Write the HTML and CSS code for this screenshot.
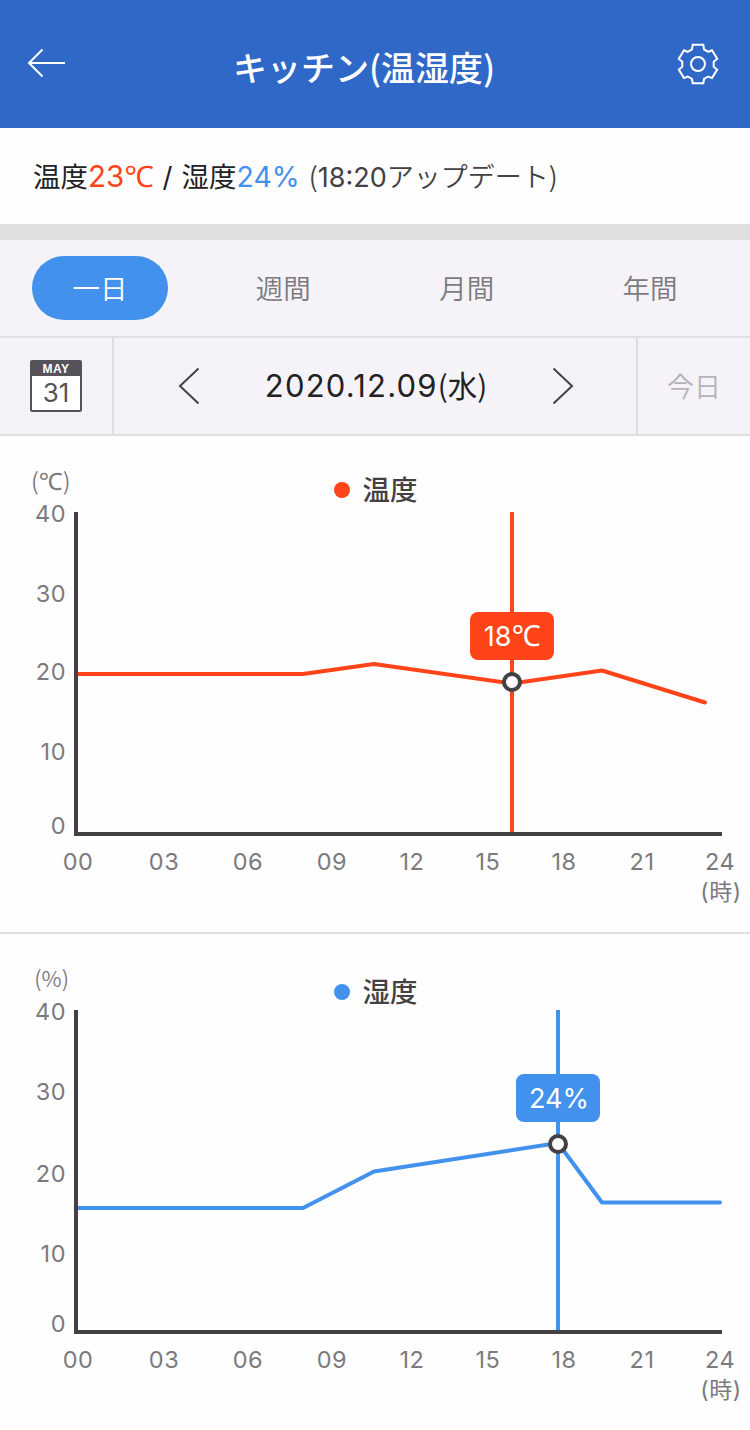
FILE: index.html
```html
<!DOCTYPE html>
<html lang="ja">
<head>
	<meta charset="UTF-8">
	<title>キッチン(温湿度)</title>
	<link rel="stylesheet" href="styles.css">
</head>
<body>
	<div class="header">
		<svg class="back" width="40" height="32" viewBox="0 0 40 32">
			<path d="M38 15H2M15.500 1.500L2 15L15.500 28.500" />
		</svg>
		<h1>キッチン(温湿度)</h1>
		<svg class="setting" width="42" height="42" viewBox="0 0 42 42">
			<path d="M15.700 1.700H26.300L27 6.300L31.300 8.800L35 7.300L40.200 15.800L36.700 18.700V23.700L40.200 26.600L35 35.100L31.300 33.500L27 36L26.300 40.300H15.700L15 36L10.700 33.500L7 35.100L1.800 26.600L5.300 23.700V18.700L1.800 15.800L7 7.300L10.700 8.800L15 6.300Z" />
			<circle cx="21" cy="21" r="7" />
		</svg>
	</div>
	<div class="status">
		<span class="name">温度</span>
		<span class="temp">23<i class="degree">℃</i></span>
		<span class="slash">/</span>
		<span class="name">湿度</span>
		<span class="humi">24%</span>
		<span class="update"><i class="cjk">(</i>18:20<i class="cjk">アップデート)</i></span>
	</div>
	<div class="tabs">
		<a class="tab active">一日</a>
		<a class="tab">週間</a>
		<a class="tab">月間</a>
		<a class="tab">年間</a>
	</div>
	<div class="dateBar">
		<div class="calendar">
			<div class="calIcon">
				<div class="calMonth">MAY</div>
				<div class="calDay">31</div>
			</div>
		</div>
		<div class="dateBox">
			<svg class="arrow" width="24" height="40" viewBox="0 0 24 40">
				<path d="M21.500 2.500L3 20L21.500 37.500" />
			</svg>
			<span class="date">2020.12.09<i class="cjk">(水)</i></span>
			<svg class="arrow" width="24" height="40" viewBox="0 0 24 40">
				<path d="M2.500 2.500L21 20L2.500 37.500" />
			</svg>
		</div>
		<div class="today">今日</div>
	</div>
	<!-- 温度 -->
	<svg class="chart tempChart" width="750" height="496" viewBox="0 0 750 496">
		<g class="yLabel">
			<text class="unit" x="70.500" y="54">(<tspan class="degree">℃</tspan>)</text>
			<text x="66" y="86">40</text>
			<text x="66" y="166">30</text>
			<text x="66" y="244">20</text>
			<text x="66" y="324">10</text>
			<text x="66" y="398">0</text>
		</g>
		<g class="legend">
			<circle cx="342" cy="54" r="8" />
			<text x="362.500" y="64">温度</text>
		</g>
		<polyline class="line" points="76,238 303,238 374,228 512,247.500 602,234.500 705,266.500" />
		<path class="axis" d="M76 76V398H722" />
		<path class="cursor" d="M512 76V396" />
		<rect class="tip" x="470" y="176" width="84" height="48" rx="8" />
		<text class="tipText" x="512" y="210">18<tspan class="degree">℃</tspan></text>
		<circle class="point" cx="512" cy="246" r="8" />
		<g class="xLabel">
			<text x="78" y="434">00</text>
			<text x="164" y="434">03</text>
			<text x="248" y="434">06</text>
			<text x="332" y="434">09</text>
			<text x="412" y="434">12</text>
			<text x="488" y="434">15</text>
			<text x="564" y="434">18</text>
			<text x="642" y="434">21</text>
			<text x="720" y="434">24</text>
			<text class="hour" x="721" y="464">(時)</text>
		</g>
	</svg>
	<!-- 湿度 -->
	<svg class="chart humiChart" width="750" height="496" viewBox="0 0 750 496">
		<g class="yLabel">
			<text class="unit percent" x="69" y="53">(%)</text>
			<text x="66" y="86">40</text>
			<text x="66" y="166">30</text>
			<text x="66" y="248">20</text>
			<text x="66" y="328">10</text>
			<text x="66" y="398">0</text>
		</g>
		<g class="legend">
			<circle cx="342" cy="58" r="8" />
			<text x="362.500" y="68">湿度</text>
		</g>
		<polyline class="line" points="76,274 303,274 374,237.500 558,209 602,268.500 720,268.500" />
		<path class="axis" d="M76 76V398H722" />
		<path class="cursor" d="M558 76V396" />
		<rect class="tip" x="516" y="140" width="84" height="48" rx="8" />
		<text class="tipText" x="559" y="174">24%</text>
		<circle class="point" cx="558" cy="210" r="8" />
		<g class="xLabel">
			<text x="78" y="434">00</text>
			<text x="164" y="434">03</text>
			<text x="248" y="434">06</text>
			<text x="332" y="434">09</text>
			<text x="412" y="434">12</text>
			<text x="488" y="434">15</text>
			<text x="564" y="434">18</text>
			<text x="642" y="434">21</text>
			<text x="720" y="434">24</text>
			<text class="hour" x="721" y="464">(時)</text>
		</g>
	</svg>
</body>
</html>
```
FILE: styles.css
```css
* {
	box-sizing: border-box;
}
body {
	margin: 0;
	width: 750px;
	background: #fefefe;
	font-family: Inter, "Noto Sans CJK JP", sans-serif;
	color: #222124;
}
svg {
	display: block;
}
.cjk {
	font-family: "Noto Sans CJK JP", sans-serif;
	font-style: normal;
	line-height: 1;
}
.degree {
	font-family: "Noto Sans", sans-serif;
	font-style: normal;
	line-height: 1;
}
.header {
	height: 128px;
	padding: 0 31px 0 27px;
	display: flex;
	align-items: center;
	justify-content: space-between;
	background: #3068c8;
}
.header svg {
	fill: none;
	stroke: #fff;
	stroke-width: 2;
}
.header h1 {
	margin: 5px 0 0;
	padding-right: 16px;
	font: 500 34px "Noto Sans CJK JP", sans-serif;
	line-height: 50px;
	color: #fff;
}
.status {
	height: 96px;
	padding-left: 33px;
	display: flex;
	align-items: baseline;
	line-height: 97px;
	font-size: 27.500px;
}
.name {
	font-family: "Noto Sans CJK JP", sans-serif;
	line-height: 1;
}
.temp {
	font-size: 29.500px;
	color: #ff441a;
}
.humi {
	font-size: 28.500px;
	color: #4291ed;
}
.slash {
	margin: 0 9px;
}
.update {
	margin-left: 9px;
	font-size: 27px;
	color: #434144;
}
.update .cjk {
	font-weight: 350;
}
.tabs {
	height: 114px;
	padding: 16px 32px 0;
	display: flex;
	justify-content: space-between;
	border-top: 16px solid #e0dee1;
	border-bottom: 2px solid #e0dee1;
	background: #f5f3f7;
}
.tab {
	width: 136px;
	height: 64px;
	border-radius: 32px;
	text-align: center;
	font: 350 27.500px "Noto Sans CJK JP", sans-serif;
	line-height: 63px;
	color: #7c7a7e;
}
.tab.active {
	background: #4291ed;
	color: #fff;
}
.dateBar {
	height: 98px;
	display: flex;
	border-bottom: 2px solid #e0dee1;
	background: #f5f3f7;
}
.calendar {
	width: 114px;
	display: flex;
	align-items: center;
	padding-left: 30px;
	border-right: 2px solid #e0dee1;
}
.calIcon {
	width: 52px;
	height: 52px;
	border: 2px solid #555358;
	border-radius: 2px;
	background: #fff;
	text-align: center;
}
.calMonth {
	height: 14px;
	background: #555358;
	font: bold 12px "Liberation Sans", sans-serif;
	line-height: 14px;
	letter-spacing: .5px;
	color: #fff;
}
.calDay {
	font-size: 26px;
	line-height: 34px;
	color: #555358;
}
.dateBox {
	width: 522px;
	padding: 0 61px 0 63px;
	display: flex;
	align-items: center;
	justify-content: space-between;
}
.arrow {
	fill: none;
	stroke: #434144;
	stroke-width: 2;
}
.date {
	font-size: 31px;
	letter-spacing: 1.200px;
	line-height: 42px;
}
.date .cjk {
	font-size: 29.500px;
	letter-spacing: 0;
}
.today {
	flex: 1;
	border-left: 2px solid #e0dee1;
	text-align: center;
	font: 350 27px "Noto Sans CJK JP", sans-serif;
	line-height: 95px;
	color: #b5b3b6;
}
.chart {
	font-size: 23.500px;
}
.tempChart {
	--color: #ff441a;
	height: 498px;
	border-bottom: 2px solid #e0dee1;
}
.humiChart {
	--color: #4291ed;
}
.yLabel, .xLabel {
	fill: #7c7a7e;
	letter-spacing: .5px;
}
.yLabel {
	text-anchor: end;
}
.xLabel {
	text-anchor: middle;
}
.unit {
	font-family: "Noto Sans CJK JP", sans-serif;
	font-weight: 350;
	letter-spacing: 0;
}
.unit .degree {
	font-size: 24px;
	font-weight: 400;
}
.percent {
	font-size: 22px;
}
.hour {
	font-size: 23px;
}
.legend {
	fill: #434144;
	font-size: 27.500px;
	font-weight: 500;
}
.legend circle {
	fill: var(--color);
}
.line {
	fill: none;
	stroke: var(--color);
	stroke-width: 4;
	stroke-linejoin: round;
	stroke-linecap: round;
}
.axis {
	fill: none;
	stroke: #434144;
	stroke-width: 4;
}
.cursor {
	stroke: var(--color);
	stroke-width: 4;
}
.tip {
	fill: var(--color);
}
.tipText {
	fill: #fff;
	font-size: 27px;
	text-anchor: middle;
}
.tipText .degree {
	font-size: 29px;
}
.point {
	fill: #fff;
	stroke: #434144;
	stroke-width: 4;
}
```
